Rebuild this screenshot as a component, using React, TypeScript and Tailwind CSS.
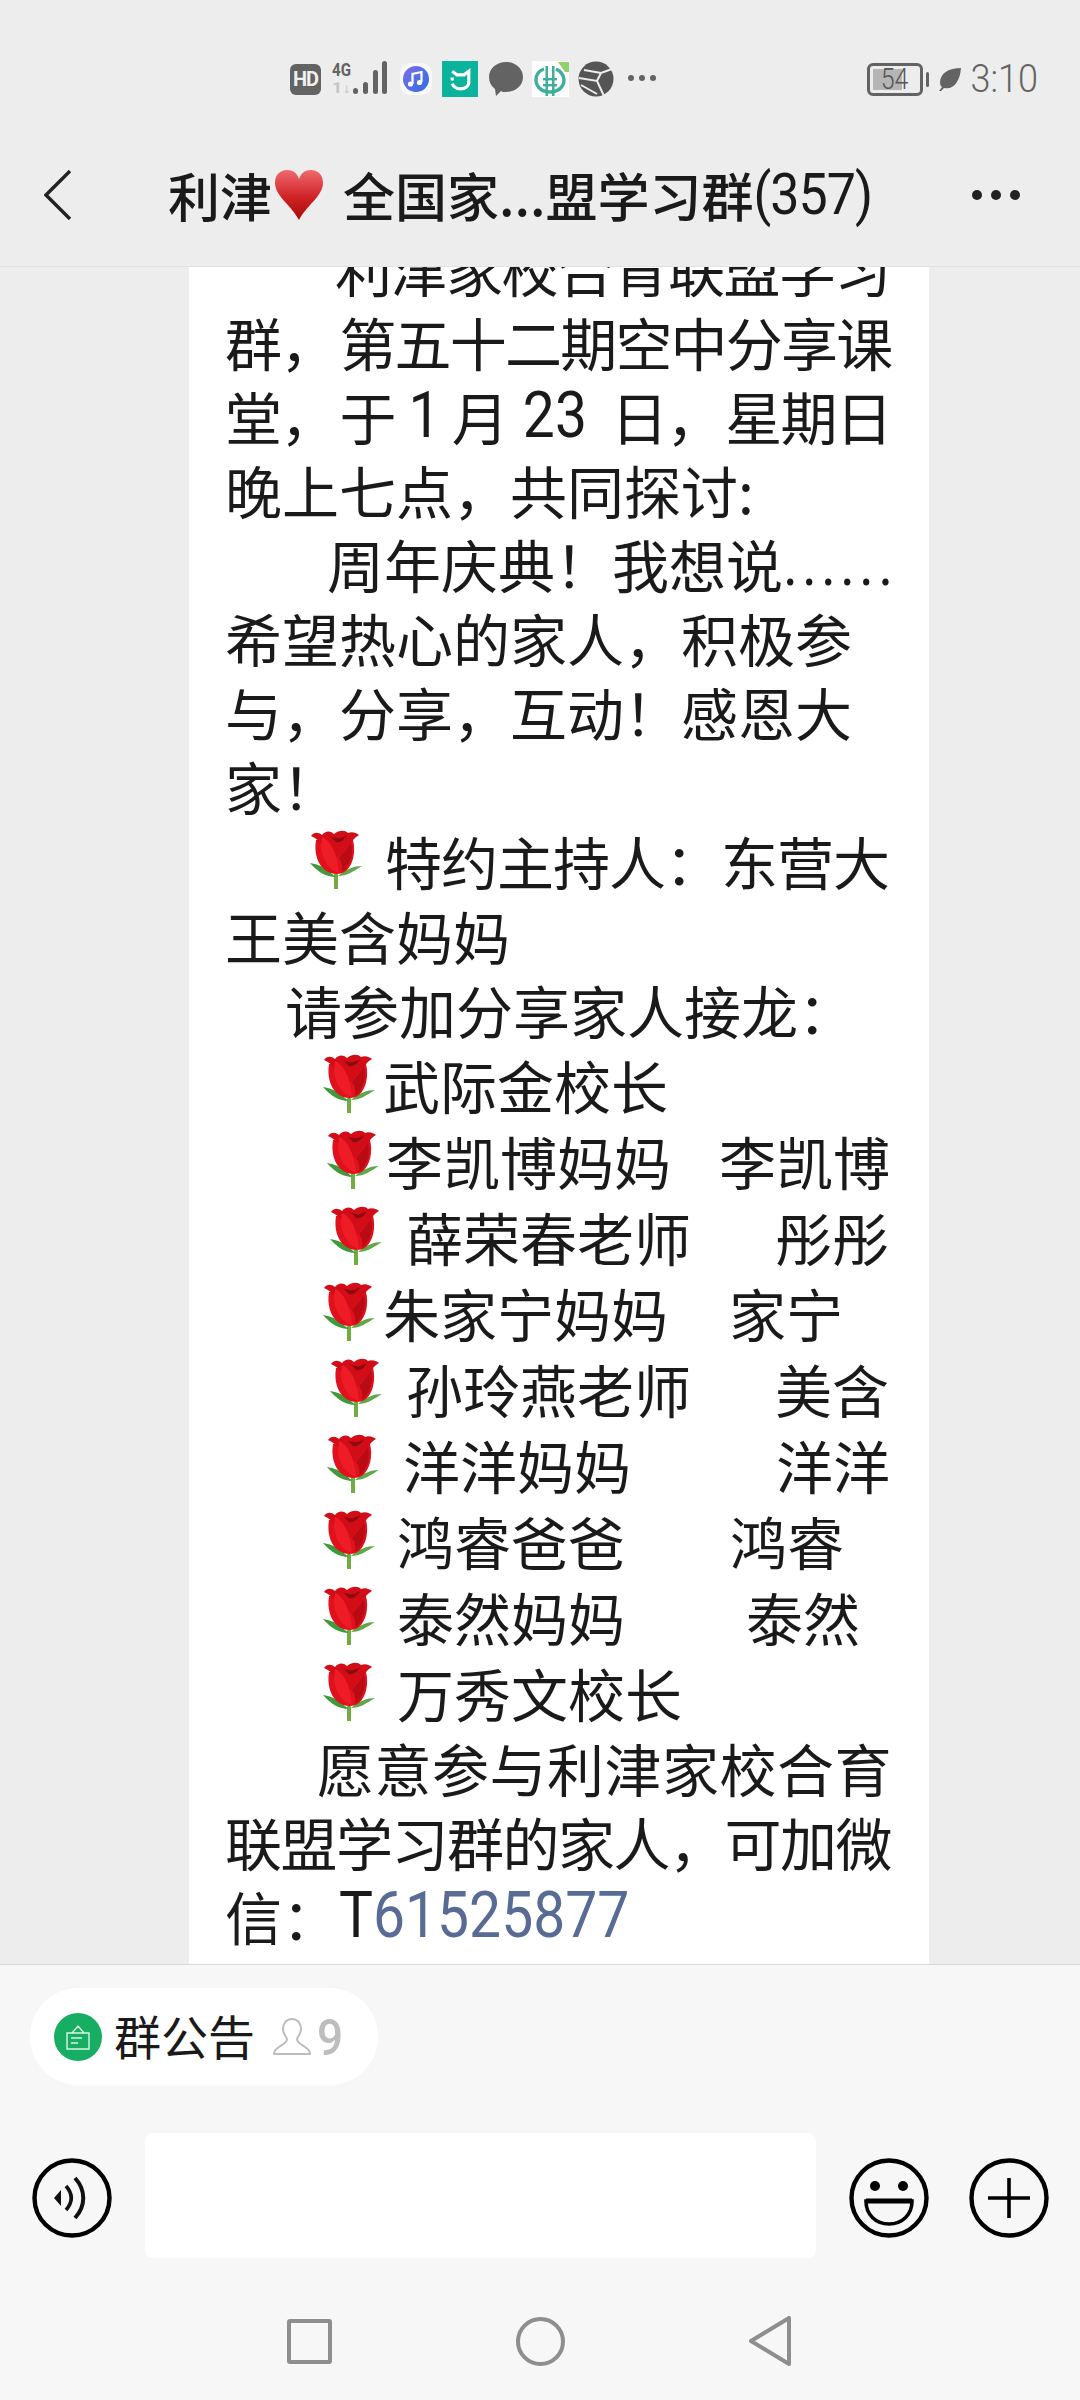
import React from "react";

const Rose = () => (
  <svg viewBox="0 0 52 60" className="w-[52px] h-[60px] shrink-0">
    <path d="M24 44 h4 v15 h-4 z" fill="#6fae3e" />
    <path d="M0 33 C7 34 11 36 14 38 L26 47 C16 47 8 42 0 33Z" fill="#3f9a3c" />
    <path d="M52 36 C44 36 36 39 28 46 C37 46 44 41 52 36Z" fill="#5fa84a" />
    <path d="M6 10 C4 22 7 34 15 40 C21 45 31 45 36 41 C43 35 46 22 43 10 Z" fill="#e0111c" />
    <path d="M1 6 C4 2 8 2 12 5 C15 1 20 0 24 4 C29 0 35 0 38 3 C42 1 47 3 49 5 C45 7 43 10 40 14 C36 20 31 24 28 28 C24 22 17 19 12 15 C9 11 6 8 1 6Z" fill="#d30d18" />
    <path d="M12 7 C20 10 27 22 29 43 C20 41 12 30 11 17Z" fill="#ee1c26" />
    <path d="M29 28 C34 22 38 18 41 13 C44 24 40 36 32 42 C33 36 32 32 29 28Z" fill="#b80b14" />
    <path d="M20 6 C25 9 31 9 37 5 C34 11 29 13 26 12Z" fill="#8e0a10" />
  </svg>
);

const Heart = () => (
  <svg viewBox="0 0 54 50" className="w-[54px] h-[50px] shrink-0">
    <defs>
      <linearGradient id="hg" x1="0" y1="0" x2="0" y2="1">
        <stop offset="0" stopColor="#ee6a6e" />
        <stop offset="0.55" stopColor="#cf2225" />
        <stop offset="1" stopColor="#a80a0a" />
      </linearGradient>
    </defs>
    <path d="M27 50 C20 36 3 26 3 13 C3 5 8 0 15 0 C21 0 25 3 27 9 C29 3 33 0 39 0 C46 0 51 5 51 13 C51 26 34 36 27 50Z" fill="url(#hg)" />
  </svg>
);

const Line = ({ children, className = "" }: { children?: React.ReactNode; className?: string }) => (
  <div className={"h-[74px] flex items-center whitespace-pre " + className}>{children}</div>
);

const RoseLine = ({ children, className = "" }: { children?: React.ReactNode; className?: string }) => (
  <div className={"h-[76px] flex items-center whitespace-pre " + className}>
    <Rose />
    {children}
  </div>
);

const Num = ({ children, className = "" }: { children?: React.ReactNode; className?: string }) => (
  <span className={"inline-block scale-y-[1.15] font-['Roboto',sans-serif] " + className}>{children}</span>
);

export default function App() {
  return (
    <div className="w-[1080px] h-[2400px] flex flex-col bg-[#ededed] overflow-hidden text-[#1a1a1a] font-['Noto_Sans_CJK_SC','Noto_Sans',sans-serif]">
      <header className="h-[267px] shrink-0 bg-[#ededed] border-b border-[#e2e2e2] flex flex-col">
        <div className="h-[160px] flex items-start pt-[60px] pl-[290px] pr-[42px]">
          <div className="flex items-center h-[38px]">
            <div className="w-[31px] h-[31px] rounded-[6px] bg-[#636363] text-[#f0f0f0] text-[20px] tracking-[-1px] font-bold flex items-center justify-center font-['Roboto',sans-serif]">HD</div>
            <svg viewBox="0 0 56 36" className="w-[56px] h-[36px] ml-[11px]">
              <text x="0" y="15" fontSize="18" fontWeight="700" fill="#636363" fontFamily="Roboto" textLength="19" lengthAdjust="spacingAndGlyphs">4G</text>
              <text x="0" y="32" fontSize="14" fontWeight="700" fill="#c4c4c4" fontFamily="Roboto" textLength="19" lengthAdjust="spacingAndGlyphs">1↓</text>
              <rect x="21" y="27" width="5" height="6" rx="2.5" fill="#636363" />
              <rect x="31" y="21" width="5" height="12" rx="2.5" fill="#636363" />
              <rect x="41" y="9" width="5" height="24" rx="2.5" fill="#636363" />
              <rect x="50" y="0" width="5" height="33" rx="2.5" fill="#636363" />
            </svg>
            <svg viewBox="0 0 32 32" className="w-[32px] h-[32px] ml-[12px]">
              <defs>
                <linearGradient id="mg" x1="0" y1="0" x2="1" y2="1">
                  <stop offset="0" stopColor="#7c6fe8" />
                  <stop offset="1" stopColor="#2f6fe0" />
                </linearGradient>
              </defs>
              <rect x="0" y="0" width="32" height="32" rx="10" fill="#f8f8f8" />
              <circle cx="16" cy="16" r="13" fill="url(#mg)" />
              <path d="M12.5 21 V11 L21.5 9 V19" fill="none" stroke="#fff" strokeWidth="2.2" />
              <circle cx="10.5" cy="21" r="2.6" fill="#fff" />
              <circle cx="19.5" cy="19.5" r="2.6" fill="#fff" />
            </svg>
            <div className="w-[36px] h-[36px] bg-[#0bb39c] ml-[10px] flex items-center justify-center">
              <svg viewBox="0 0 24 24" className="w-[25px] h-[25px]">
                <path d="M4 4 L8.5 7.5 H15.5 L20 4 V14 C20 19 16 21 12 21 C8.5 21 5.5 19.5 4 16" fill="none" stroke="#fff" strokeWidth="3" />
                <path d="M4 10 V13" stroke="#fff" strokeWidth="3" />
              </svg>
            </div>
            <svg viewBox="0 0 36 36" className="w-[36px] h-[36px] ml-[10px]">
              <path d="M18 1 C28 1 35 8 35 16 C35 25 27 31 18 31 C16 31 14 31 13 30 L8 35 L7 28 C3 25 1 21 1 16 C1 8 8 1 18 1Z" fill="#636363" />
            </svg>
            <div className="w-[37px] h-[36px] bg-white ml-[8px]">
              <svg viewBox="0 0 37 36" className="w-[37px] h-[36px]">
                <path d="M12 8 C6 10 4 15 4 19 C4 26 10 31 18 31 C26 31 32 26 32 19 C32 15 29 10 24 8" fill="none" stroke="#3fae9c" strokeWidth="3.4" />
                <rect x="13.5" y="5" width="2.5" height="30" fill="#3fae9c" />
                <rect x="20" y="5" width="2.5" height="30" fill="#3fae9c" />
                <rect x="11" y="17" width="14" height="2.4" fill="#3fae9c" />
                <rect x="11" y="23" width="14" height="2.4" fill="#3fae9c" />
                <path d="M26 1 H37 V11 L33 11Z" fill="#8fd16a" />
              </svg>
            </div>
            <svg viewBox="0 0 36 36" className="w-[36px] h-[36px] ml-[9px]">
              <circle cx="18" cy="18" r="17.5" fill="#555" />
              <path d="M6 9 L23 12 L34 8 M23 12 L19 20 L1 17 M19 20 L26 35 M3 24 L19 33" stroke="#ededed" strokeWidth="2" fill="none" />
            </svg>
            <div className="flex gap-[5px] ml-[14px] mb-[2px]">
              <span className="w-[6px] h-[6px] rounded-full bg-[#636363]" />
              <span className="w-[6px] h-[6px] rounded-full bg-[#636363]" />
              <span className="w-[6px] h-[6px] rounded-full bg-[#636363]" />
            </div>
          </div>
          <div className="flex items-center h-[38px] ml-auto">
            <div className="w-[56px] h-[33px] border-[3px] border-[#636363] rounded-[6px] p-[3px] relative">
              <div className="w-[29px] h-full bg-[#b5b5b5]" />
              <span className="absolute inset-0 flex items-center justify-center text-[25px] text-[#555] leading-none font-['Roboto',sans-serif] font-light scale-y-[1.15]">54</span>
            </div>
            <div className="w-[3px] h-[15px] rounded-full bg-[#636363] ml-[3px]" />
            <svg viewBox="0 0 24 24" className="w-[24px] h-[24px] ml-[9px]">
              <path d="M23 1 C11 1 2 6 2 16 C2 18 3 19 4 20 L1 24 H3 L6 21 C16 23 22 14 23 1Z" fill="#636363" />
            </svg>
            <span className="text-[36px] text-[#636363] ml-[9px] leading-none font-['Roboto',sans-serif] font-light scale-y-[1.1]">3:10</span>
          </div>
        </div>
        <div className="h-[70px] flex items-center pl-[44px] pr-[60px]">
          <svg viewBox="0 0 28 50" className="w-[28px] h-[50px] shrink-0">
            <path d="M26 1 L2 25 L26 49" fill="none" stroke="#222" strokeWidth="3.4" />
          </svg>
          <div className="flex items-center ml-[96px] text-[52px] leading-none font-medium text-[#1a1a1a] whitespace-pre">
            <span>利津</span>
            <Heart />
            <span className="ml-[17px]">全国家</span>
            <span className="-mt-[2px]">...</span>
            <span>盟学习群</span>
            <span className="tracking-[-1px] font-['Roboto',sans-serif] font-normal scale-y-[1.1]">(357)</span>
          </div>
          <div className="flex gap-[9px] ml-auto">
            <span className="w-[10px] h-[10px] rounded-full bg-[#222]" />
            <span className="w-[10px] h-[10px] rounded-full bg-[#222]" />
            <span className="w-[10px] h-[10px] rounded-full bg-[#222]" />
          </div>
        </div>
      </header>

      <main className="flex-1 overflow-hidden min-h-0">
        <div className="ml-[189px] w-[740px] bg-white pl-[36px] pb-[60px] -mt-[37px] text-[57px] leading-[74px] text-[#1a1a1a]">
          <Line className="pl-[110px] tracking-[-1.5px]">利津家校合育联盟学习</Line>
          <Line className="tracking-[-1.8px]"><span className="mr-[4px]">群，</span>第五十二期空中分享课</Line>
          <Line className="tracking-[-1.8px]"><span className="mr-[4px]">堂，</span>于<Num className="ml-[14px] tracking-normal">1</Num><span className="ml-[11px]">月</span><Num className="ml-[16px] tracking-normal">23</Num><span className="ml-[24px] mr-[4px]">日，</span>星期日</Line>
          <Line>晚上七点，共同探讨:</Line>
          <Line className="pl-[102px]">周年庆典！我想说<Num className="tracking-[4px]">......</Num></Line>
          <Line>希望热心的家人，积极参</Line>
          <Line>与，分享，互动！感恩大</Line>
          <Line>家！</Line>
          <RoseLine className="pl-[85px]"><span className="ml-[23px] tracking-[-1px]">特约主持人：东营大</span></RoseLine>
          <Line>王美含妈妈</Line>
          <Line className="pl-[60px]">请参加分享家人接龙：</Line>
          <RoseLine className="pl-[98px]"><span className="ml-[8px]">武际金校长</span></RoseLine>
          <RoseLine className="pl-[102px]"><span className="ml-[7px]">李凯博妈妈</span><span className="ml-[48px]">李凯博</span></RoseLine>
          <RoseLine className="pl-[105px]"><span className="ml-[24px]">薛荣春老师</span><span className="ml-[84px]">彤彤</span></RoseLine>
          <RoseLine className="pl-[98px]"><span className="ml-[8px]">朱家宁妈妈</span><span className="ml-[61px]">家宁</span></RoseLine>
          <RoseLine className="pl-[105px]"><span className="ml-[24px]">孙玲燕老师</span><span className="ml-[84px]">美含</span></RoseLine>
          <RoseLine className="pl-[102px]"><span className="ml-[24px]">洋洋妈妈</span><span className="ml-[145px]">洋洋</span></RoseLine>
          <RoseLine className="pl-[98px]"><span className="ml-[22px]">鸿睿爸爸</span><span className="ml-[105px]">鸿睿</span></RoseLine>
          <RoseLine className="pl-[98px]"><span className="ml-[22px]">泰然妈妈</span><span className="ml-[121px]">泰然</span></RoseLine>
          <RoseLine className="pl-[98px]"><span className="ml-[22px]">万秀文校长</span></RoseLine>
          <Line className="pl-[92px] tracking-[0.5px]">愿意参与利津家校合育</Line>
          <Line className="tracking-[-1.5px]">联盟学习群的家人，可加微</Line>
          <Line>信：<Num>T<span className="text-[#576b95]">61525877</span></Num></Line>
        </div>
      </main>

      <footer className="h-[436px] shrink-0 bg-[#f7f7f7] border-t border-[#d9d9d9] flex flex-col">
        <div className="pl-[30px] pt-[23px]">
          <div className="w-[348px] h-[97px] rounded-[48px] bg-white flex items-center pl-[24px]">
            <div className="w-[48px] h-[48px] rounded-full bg-[#17ad63] flex items-center justify-center">
              <svg viewBox="0 0 28 28" className="w-[28px] h-[28px]">
                <path d="M3 10 H25 V26 H3Z M8 10 L14 3 L20 10 M7 15 H18 M7 20 H14" fill="none" stroke="#d6f5e4" strokeWidth="1.4" />
              </svg>
            </div>
            <span className="text-[47px] leading-none ml-[12px] mb-[4px] text-[#1a1a1a]">群公告</span>
            <svg viewBox="0 0 38 38" className="w-[38px] h-[38px] ml-[18px]">
              <path d="M19 1 C13 1 10 6 10 11 C10 16 13 18 14 21 C14 25 10 26 6 29 C3 31 1 33 1 36 H37 C37 33 35 31 32 29 C28 26 24 25 24 21 C25 18 28 16 28 11 C28 6 25 1 19 1Z" fill="none" stroke="#bdbdbd" strokeWidth="2" />
            </svg>
            <span className="text-[46px] leading-none text-[#bdbdbd] ml-[6px] font-['Roboto',sans-serif] font-medium scale-y-[1.1]">9</span>
          </div>
        </div>
        <div className="flex items-center mt-[52px] pl-[32px]">
          <svg viewBox="0 0 80 80" className="w-[80px] h-[80px] shrink-0">
            <circle cx="40" cy="40" r="37.5" fill="none" stroke="#000" strokeWidth="4.4" />
            <path d="M22 40 L29 32 L29 48Z" fill="#111" />
            <path d="M34 28 C41 36 41 44 34 52" fill="none" stroke="#111" strokeWidth="3.6" />
            <path d="M43 20 C54 32 54 48 43 60" fill="none" stroke="#111" strokeWidth="4" />
          </svg>
          <div className="w-[671px] h-[125px] bg-white rounded-[8px] ml-[33px] -mt-[4px]" />
          <svg viewBox="0 0 80 80" className="w-[80px] h-[80px] shrink-0 ml-[33px]">
            <circle cx="40" cy="40" r="37.5" fill="none" stroke="#000" strokeWidth="4.4" />
            <circle cx="26" cy="28" r="5" fill="#000" />
            <circle cx="54" cy="28" r="5" fill="#000" />
            <path d="M17 43 H63 C63 57 53 66 40 66 C27 66 17 57 17 43Z" fill="none" stroke="#000" strokeWidth="3.6" />
            <path d="M17 43 H63" stroke="#000" strokeWidth="5" />
          </svg>
          <svg viewBox="0 0 80 80" className="w-[80px] h-[80px] shrink-0 ml-[40px]">
            <circle cx="40" cy="40" r="37.5" fill="none" stroke="#000" strokeWidth="4.4" />
            <path d="M40 20 V60 M19 40 H61" stroke="#000" strokeWidth="3.6" />
          </svg>
        </div>
        <div className="flex items-center mt-[58px] pl-[287px]">
          <div className="w-[45px] h-[45px] border-[4px] border-[#8e8e8e] rounded-[3px]" />
          <div className="w-[49px] h-[49px] border-[4px] border-[#8e8e8e] rounded-full ml-[184px]" />
          <svg viewBox="0 0 44 50" className="w-[44px] h-[50px] ml-[183px]">
            <path d="M41 2 V48 L3 25Z" fill="none" stroke="#8e8e8e" strokeWidth="4" strokeLinejoin="round" />
          </svg>
        </div>
      </footer>
    </div>
  );
}
